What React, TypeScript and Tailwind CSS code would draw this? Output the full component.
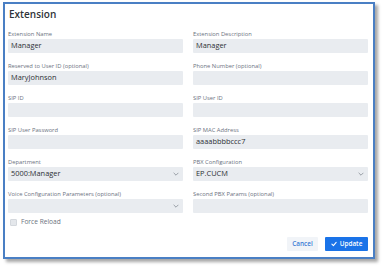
import React from 'react';

const font = { fontFamily: '"Open Sans", "Noto Sans", sans-serif' };

const Chevron = () => (
  <svg className="w-[6px] h-[6px] text-[#8a9099]" viewBox="0 0 10 10" fill="none" stroke="currentColor" strokeWidth="1.4">
    <path d="M1.5 3.5 L5 7 L8.5 3.5" strokeLinecap="round" strokeLinejoin="round" />
  </svg>
);

interface FieldProps {
  label: string;
  value?: string;
  select?: boolean;
}

const Field: React.FC<FieldProps> = ({ label, value, select }) => (
  <div className="flex flex-col">
    <div className="h-[9px] leading-[9px] text-[5.8px] text-[#6b7280]">{label}</div>
    <div className="h-[14px] bg-[#e9ecf0] rounded-[1px] flex items-center justify-between pl-[3px] pr-[4px]">
      <span className="text-[7.4px] text-[#2d3035] font-medium">{value}</span>
      {select && <Chevron />}
    </div>
  </div>
);

export default function App() {
  return (
    <div className="w-[384px] h-[267px] bg-white pt-[2px] pl-[3px]" style={font}>
      <div className="w-[372px] h-[257px] border-2 border-[#4a7fc4] bg-white shadow-[3px_3px_3px_rgba(0,0,0,0.35)] pl-[3px] pr-[5px] pt-[2px]">
        <div className="h-[16px] leading-[16px] text-[10px] font-semibold text-[#2f3338] pl-[1px]">Extension</div>
        <div className="mt-[8px] grid grid-cols-2 gap-x-[10px] gap-y-[9px]">
          <Field label="Extension Name" value="Manager" />
          <Field label="Extension Description" value="Manager" />
          <Field label="Reserved to User ID (optional)" value="MaryJohnson" />
          <Field label="Phone Number (optional)" />
          <Field label="SIP ID" />
          <Field label="SIP User ID" />
          <Field label="SIP User Password" />
          <Field label="SIP MAC Address" value="aaaabbbbccc7" />
          <Field label="Department" value="5000:Manager" select />
          <Field label="PBX Configuration" value="EP.CUCM" select />
          <Field label="Voice Configuration Parameters (optional)" select />
          <Field label="Second PBX Params (optional)" />
        </div>
        <div className="mt-[4px] h-[10px] flex items-center gap-[4px] pl-[2px]">
          <div className="w-[7px] h-[7px] bg-[#e4e7eb] border border-[#d4d8dd] rounded-[1px]" />
          <span className="text-[6.6px] text-[#6b7280]">Force Reload</span>
        </div>
        <div className="mt-[10px] flex justify-end gap-[7px]">
          <button className="h-[14px] w-[31px] bg-[#f1f4f8] text-[#3a7bd5] text-[6.4px] font-semibold rounded-[1px]">Cancel</button>
          <button className="h-[14px] w-[43px] bg-[#1a73e8] text-white text-[6.4px] font-semibold rounded-[1px] flex items-center justify-center gap-[3px]">
            <svg className="w-[6px] h-[6px]" viewBox="0 0 10 10" fill="none" stroke="currentColor" strokeWidth="1.8">
              <path d="M1.5 5.2 L4 7.6 L8.6 2.4" strokeLinecap="round" strokeLinejoin="round" />
            </svg>
            Update
          </button>
        </div>
      </div>
    </div>
  );
}
